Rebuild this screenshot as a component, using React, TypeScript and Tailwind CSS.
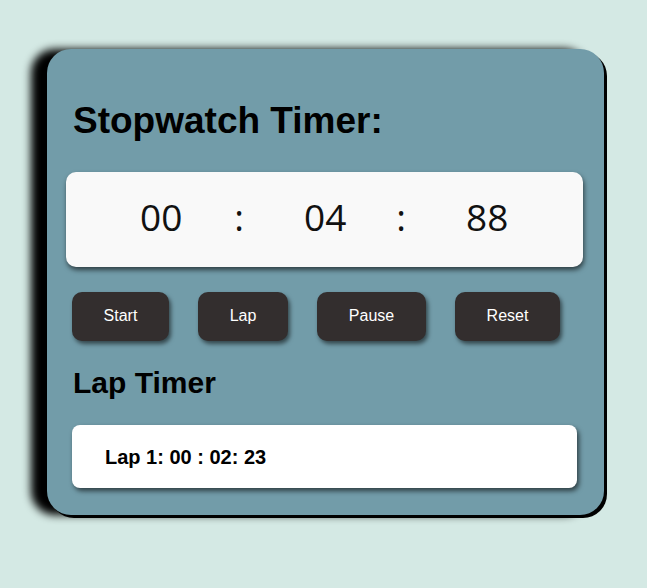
export default function App() {
  const buttons = [
    { label: 'Start', w: 'w-[97px]' },
    { label: 'Lap', w: 'w-[90px]' },
    { label: 'Pause', w: 'w-[109px]' },
    { label: 'Reset', w: 'w-[105px]' },
  ];

  return (
    <div className="w-[647px] h-[588px] bg-[#d4e9e4] pt-[49px] pl-[47px] font-['Liberation_Sans',Arial,sans-serif]">
      <div className="w-[557px] h-[466px] bg-[#729ca9] rounded-[24px] shadow-[-16px_0px_8px_#000,3px_3px_0_#000] pt-[50px]">
        <h1 className="ml-[26px] text-[37px] font-bold text-black leading-[44px]">Stopwatch Timer:</h1>

        {/* time display */}
        <div className="ml-[19px] mr-[21px] mt-[29px] h-[95px] pb-[6px] bg-[#f9f9f9] rounded-[10px] shadow-[1px_3px_5px_rgba(0,0,0,0.6)] flex items-center font-['Open_Sans',sans-serif] text-[37px] text-[#111]">
          <span className="ml-[74px]">00</span>
          <span className="ml-[52px]">:</span>
          <span className="ml-[60px]">04</span>
          <span className="ml-[50px]">:</span>
          <span className="ml-[60px]">88</span>
        </div>

        <div className="flex gap-[29px] ml-[25px] mt-[25px]">
          {buttons.map((b) => (
            <button
              key={b.label}
              className={`${b.w} h-[49px] pb-[1px] bg-[#332e2e] text-white text-[16px] rounded-[10px] shadow-[2px_3px_4px_rgba(0,0,0,0.55)]`}
            >
              {b.label}
            </button>
          ))}
        </div>

        <h2 className="ml-[26px] mt-[25px] text-[30px] font-bold text-black leading-[34px]">Lap Timer</h2>

        <div className="ml-[25px] mr-[27px] mt-[25px] h-[63px] bg-white rounded-[8px] shadow-[2px_3px_5px_rgba(0,0,0,0.6)] flex items-center pl-[33px]">
          <span className="text-[20px] font-bold text-black">Lap 1: 00 : 02: 23</span>
        </div>
      </div>
    </div>
  );
}
